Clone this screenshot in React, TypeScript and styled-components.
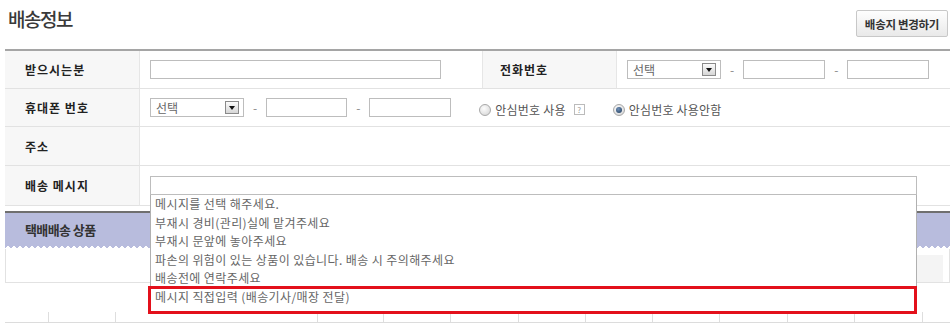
import React from "react";
import styled, { createGlobalStyle, css } from "styled-components";

const GlobalStyle = createGlobalStyle`
  html, body { margin: 0; padding: 0; background: #fff; }
  body { font-family: "Noto Sans CJK KR", "Noto Sans", sans-serif; color: #333; }
  * { box-sizing: border-box; }
`;

const Page = styled.div`
  width: 950px;
  height: 324px;
  overflow: hidden;
  padding-left: 5px;
`;

const Header = styled.div`
  height: 49px;
  display: flex;
  justify-content: space-between;
  align-items: flex-start;
  padding-right: 2px;
`;

const Title = styled.h2`
  margin: 7px 0 0 3px;
  font-size: 19px;
  line-height: 24px;
  font-weight: 500;
  letter-spacing: -1.5px;
  color: #3a3a3a;
`;

const ChangeButton = styled.button`
  margin-top: 10px;
  width: 92px;
  height: 27px;
  padding: 0;
  border: 1px solid #c8c8c8;
  border-radius: 2px;
  background: linear-gradient(#fefefe, #e9e9e9);
  font-family: "Noto Sans CJK KR", sans-serif;
  font-size: 11.5px;
  font-weight: bold;
  letter-spacing: -0.3px;
  color: #333;
`;

const InfoTable = styled.div`
  border-top: 2px solid #a5a5a5;
  display: grid;
  grid-template-columns: 135px 342px 135px 1fr;
  grid-template-rows: 38px 38px 39px 40px;
`;

const LabelCell = styled.div<{ $side?: boolean }>`
  display: flex;
  align-items: center;
  padding-left: ${(p) => (p.$side ? "17px" : "20px")};
  background: #f7f7f7;
  border-bottom: 1px solid #e2e2e2;
  border-right: 1px solid #e6e6e6;
  ${(p) =>
    p.$side &&
    css`
      border-left: 1px solid #e6e6e6;
    `}
  font-size: 12px;
  font-weight: bold;
  letter-spacing: 1px;
  color: #222;
`;

const ValueCell = styled.div<{ $span?: number }>`
  display: flex;
  align-items: center;
  gap: 8px;
  padding-left: 10px;
  border-bottom: 1px solid #e2e2e2;
  grid-column: span ${(p) => p.$span ?? 1};
  font-size: 12px;
  color: #666;
`;

const TextInput = styled.input<{ $w: number }>`
  width: ${(p) => p.$w}px;
  height: 19px;
  border: 1px solid #bdbdbd;
  background: #fff;
  padding: 0 4px;
  margin: 0;
  flex: none;
`;

const Dash = styled.span`
  color: #888;
  font-size: 12px;
  padding: 0 1px;
`;

const SelectBox = styled.div`
  width: 94px;
  height: 19px;
  flex: none;
  border: 1px solid #bdbdbd;
  background: #fff;
  display: flex;
  align-items: center;
  justify-content: space-between;
  padding: 0 4px 0 5px;
  font-size: 12px;
  color: #666;
`;

const SelectArrow = styled.span`
  width: 14px;
  height: 13px;
  border: 1px solid #8a8a8a;
  background: linear-gradient(#fbfbfb, #d6d6d6);
  display: flex;
  align-items: center;
  justify-content: center;
  &::after {
    content: "";
    border-left: 3px solid transparent;
    border-right: 3px solid transparent;
    border-top: 4px solid #111;
    margin-top: 1px;
  }
`;

const RadioGroup = styled.div`
  display: flex;
  align-items: center;
  gap: 28px;
  margin-left: 20px;
  margin-top: 4px;
`;

const RadioOption = styled.label`
  display: flex;
  align-items: center;
  gap: 4px;
  font-size: 12px;
  letter-spacing: 0.2px;
  color: #555;
`;

const Radio = styled.span<{ $checked?: boolean }>`
  position: relative;
  width: 12px;
  height: 12px;
  border-radius: 50%;
  border: 1px solid #a8a8a8;
  background: radial-gradient(circle at 40% 35%, #fdfdfd, #d2d2d2);
  ${(p) =>
    p.$checked &&
    css`
      &::after {
        content: "";
        position: absolute;
        left: 2px;
        top: 2px;
        width: 6px;
        height: 6px;
        border-radius: 50%;
        background: radial-gradient(circle at 40% 35%, #7191b8, #1c3858);
      }
    `}
`;

const HelpBox = styled.span`
  width: 11px;
  height: 11px;
  margin-left: 4px;
  border: 1px solid #bbb;
  font-size: 8px;
  line-height: 9px;
  text-align: center;
  color: #999;
`;

const MessageField = styled.div`
  position: relative;
  width: 767px;
  flex: none;
`;

const MessageInput = styled(TextInput)`
  display: block;
`;

const DropList = styled.ul`
  position: absolute;
  top: 100%;
  left: 0;
  width: 100%;
  height: 118px;
  margin: 0;
  padding: 0;
  list-style: none;
  background: #fff;
  border: 1px solid #b0b0b0;
  border-top: none;
  z-index: 10;
`;

const DropItem = styled.li`
  height: 18.5px;
  line-height: 18.5px;
  padding-left: 4px;
  font-size: 12px;
  letter-spacing: 0.4px;
  color: #666;
  white-space: nowrap;
`;

const Highlight = styled.div`
  position: absolute;
  top: 91px;
  left: -3px;
  width: 769px;
  height: 28px;
  border: 3px solid #e3101b;
  pointer-events: none;
`;

const ProductSection = styled.div`
  margin-top: 5px;
  border-top: 2px solid #6f6f6f;
`;

const ProductHead = styled.div`
  height: 30px;
  background: #b8bcdd;
  display: flex;
  align-items: center;
  padding: 3px 0 0 20px;
  font-size: 13px;
  font-weight: bold;
  letter-spacing: -0.6px;
  color: #333;
`;

const Zigzag = styled.div`
  height: 6px;
  background:
    linear-gradient(135deg, #b8bcdd 50%, transparent 50%) 0 0 / 6px 6px repeat-x,
    linear-gradient(225deg, #b8bcdd 50%, transparent 50%) 0 0 / 6px 6px repeat-x;
`;

const ProductBody = styled.div`
  height: 34px;
  border: 1px solid #e2e2e2;
  border-top: none;
  background: #fff;
  display: flex;
  justify-content: flex-end;
  align-items: flex-end;
  padding-right: 6px;
`;

const ThumbCell = styled.div`
  width: 26px;
  height: 27px;
  background: #f4f4f4;
`;

const TickRow = styled.div`
  margin-top: 29px;
  height: 11px;
  display: flex;
  border-bottom: 1px solid #dcdcdc;
`;

const TickCell = styled.div<{ $w: number }>`
  width: ${(p) => p.$w}px;
  flex: none;
  border-right: 1px solid #dedede;
`;

const messages = [
  "메시지를 선택 해주세요.",
  "부재시 경비(관리)실에 맡겨주세요",
  "부재시 문앞에 놓아주세요",
  "파손의 위험이 있는 상품이 있습니다. 배송 시 주의해주세요",
  "배송전에 연락주세요",
  "메시지 직접입력 (배송기사/매장 전달)",
];

const tickWidths = [44, 67, 202, 66, 67, 68, 67, 67, 67, 68, 67, 68];

const PhoneSelect = () => (
  <SelectBox>
    선택
    <SelectArrow />
  </SelectBox>
);

export default function App() {
  return (
    <>
      <GlobalStyle />
      <Page>
        <Header>
          <Title>배송정보</Title>
          <ChangeButton>배송지 변경하기</ChangeButton>
        </Header>

        <InfoTable>
          <LabelCell>받으시는분</LabelCell>
          <ValueCell>
            <TextInput $w={291} />
          </ValueCell>
          <LabelCell $side>전화번호</LabelCell>
          <ValueCell>
            <PhoneSelect />
            <Dash>-</Dash>
            <TextInput $w={82} />
            <Dash>-</Dash>
            <TextInput $w={82} />
          </ValueCell>

          <LabelCell>휴대폰 번호</LabelCell>
          <ValueCell $span={3}>
            <PhoneSelect />
            <Dash>-</Dash>
            <TextInput $w={81} />
            <Dash>-</Dash>
            <TextInput $w={82} />
            <RadioGroup>
              <RadioOption>
                <Radio />
                안심번호 사용
                <HelpBox>?</HelpBox>
              </RadioOption>
              <RadioOption>
                <Radio $checked />
                안심번호 사용안함
              </RadioOption>
            </RadioGroup>
          </ValueCell>

          <LabelCell>주소</LabelCell>
          <ValueCell $span={3} />

          <LabelCell>배송 메시지</LabelCell>
          <ValueCell $span={3}>
            <MessageField>
              <MessageInput $w={767} />
              <DropList>
                {messages.map((m) => (
                  <DropItem key={m}>{m}</DropItem>
                ))}
                <Highlight />
              </DropList>
            </MessageField>
          </ValueCell>
        </InfoTable>

        <ProductSection>
          <ProductHead>택배배송 상품</ProductHead>
          <Zigzag />
          <ProductBody>
            <ThumbCell />
          </ProductBody>
        </ProductSection>

        <TickRow>
          {tickWidths.map((w, i) => (
            <TickCell key={i} $w={w} />
          ))}
        </TickRow>
      </Page>
    </>
  );
}
